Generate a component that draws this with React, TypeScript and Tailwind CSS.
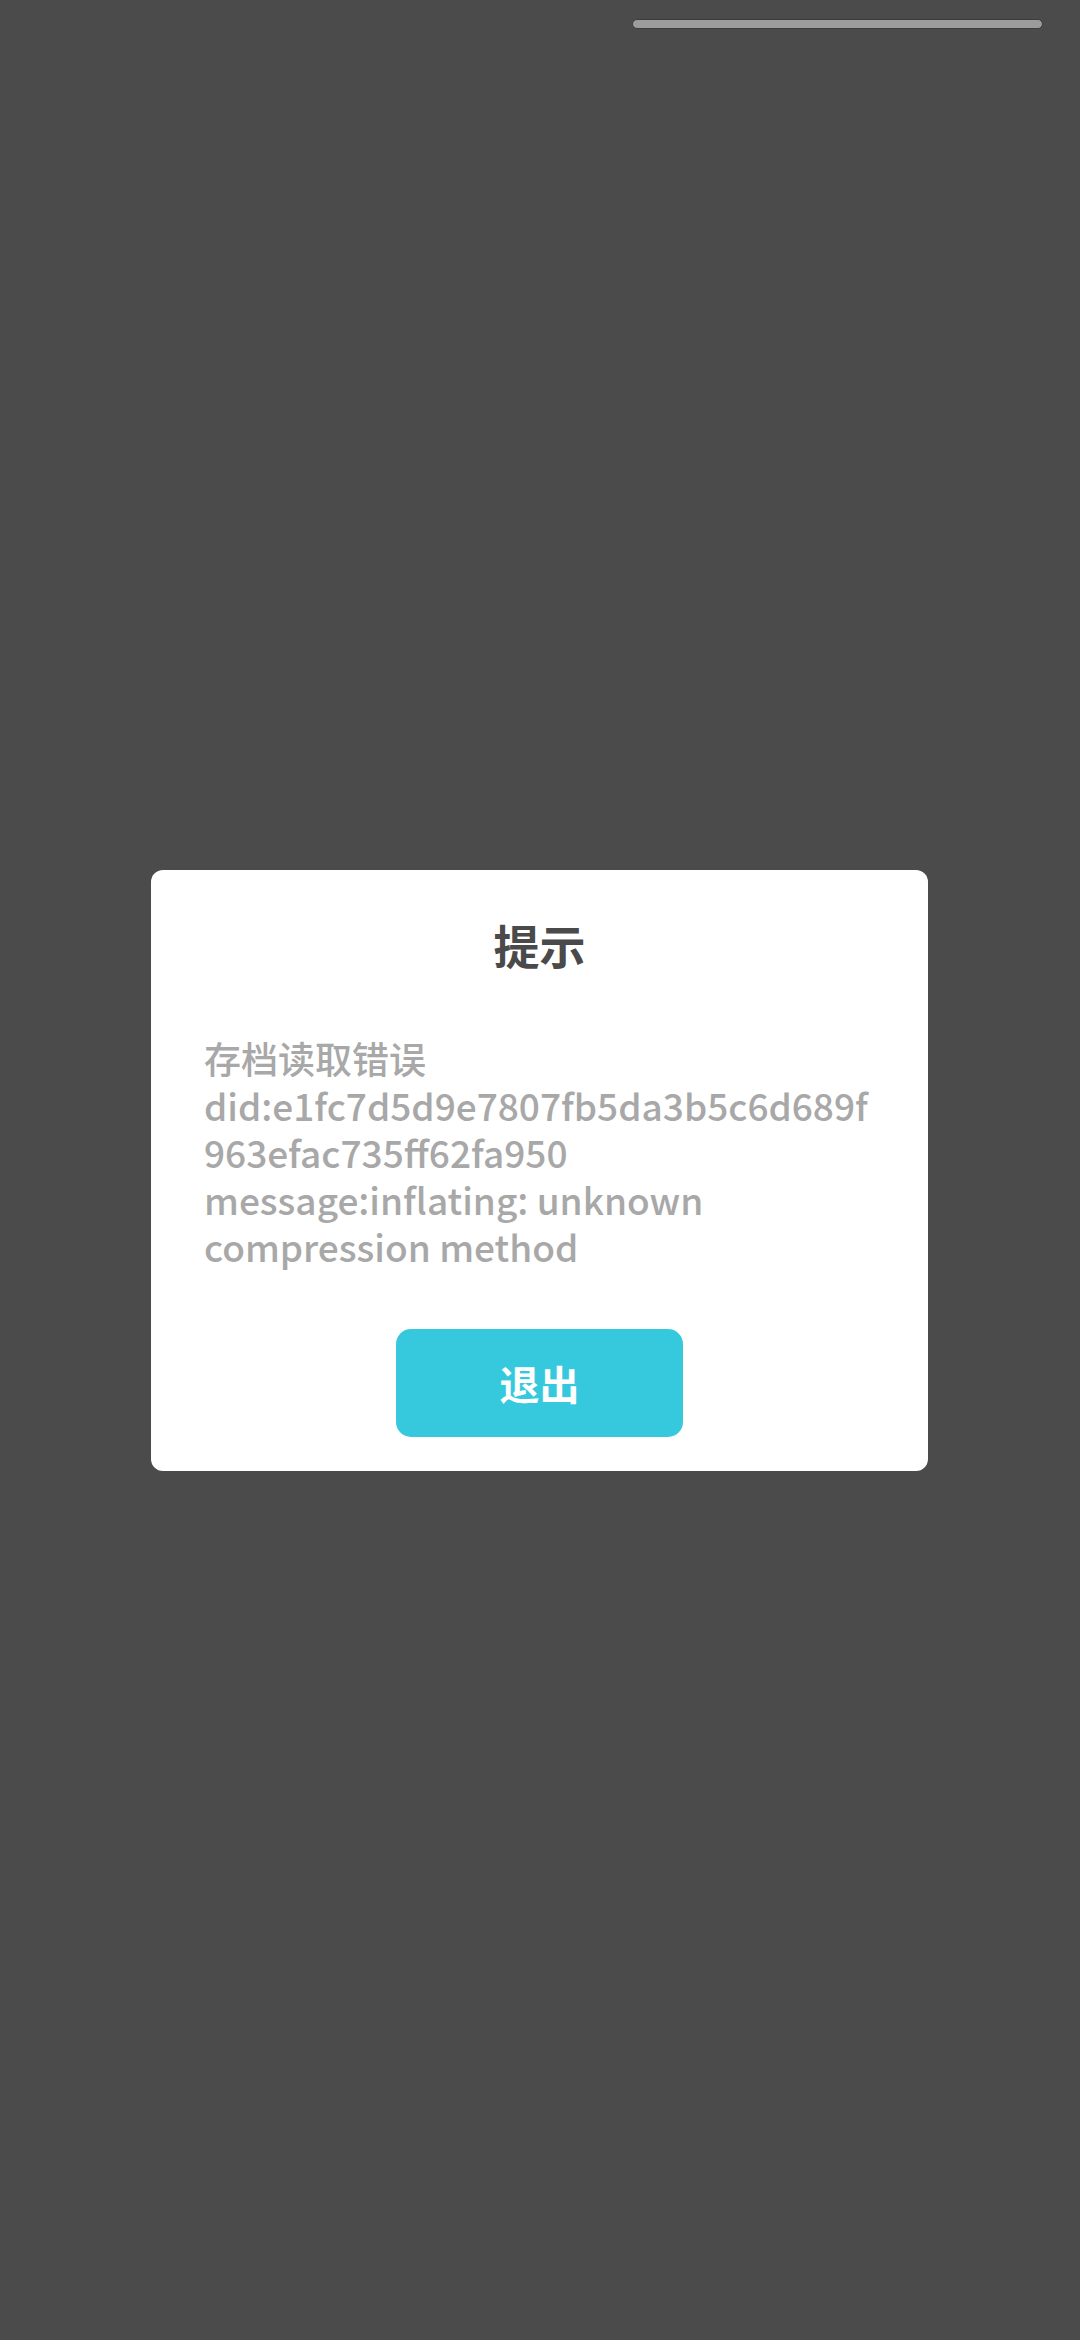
export default function App() {
  return (
    <div
      className="flex h-[2340px] w-[1080px] flex-col bg-[#4b4b4b] pt-[19px]"
      style={{ fontFamily: '"Noto Sans CJK SC", "Noto Sans", sans-serif' }}
    >
      {/* home indicator */}
      <div className="flex justify-end pr-[37px]">
        <div className="h-[10px] w-[411px] rounded-full border border-[#3c3c3c] bg-[#9b9b9b]" />
      </div>

      <div className="mt-[841px] ml-[151px] flex w-[777px] flex-col rounded-[12px] bg-white px-[48px] pt-[20px] pb-[34px]">
        <div className="text-center text-[46px] leading-[108px] font-bold text-[#4a4a4a]">提示</div>
        <div className="mt-[37px] break-words pl-[5px] text-[37px] leading-[47px] font-medium text-[#a8a8a8]">
          存档读取错误
          <br />
          did:e1fc7d5d9e7807fb5da3b5c6d689f963efac735ff62fa950
          <br />
          message:inflating: unknown compression method
        </div>
        <div className="mt-[59px] flex justify-center">
          <button className="h-[108px] w-[287px] rounded-[15px] bg-[#36c9de] text-[40px] font-bold text-white">
            退出
          </button>
        </div>
      </div>
    </div>
  );
}
